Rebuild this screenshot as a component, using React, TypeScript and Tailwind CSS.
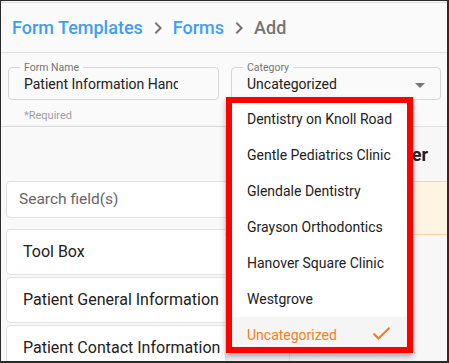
import React from "react";

const Chevron = () => (
  <svg width="24" height="24" viewBox="0 0 24 24" className="shrink-0">
    <path d="M10 6 8.59 7.41 13.17 12l-4.58 4.59L10 18l6-6z" fill="#757575" />
  </svg>
);

const Field = ({ label, value, arrow, width }: { label: string; value: string; arrow?: boolean; width: string }) => (
  <div className={`relative h-[33px] border border-[#d6d6d6] rounded-[4px] flex items-center pl-[15px] pt-[1px] ${width}`}>
    <span className="absolute top-[-6px] left-[11px] px-[4px] bg-[#fafafa] text-[10.5px] leading-[12px] text-[#757575]">
      {label}
    </span>
    <span className="text-[14px] leading-[16px] text-[#212121] whitespace-nowrap overflow-hidden w-[154px]">{value}</span>
    {arrow && (
      <svg width="24" height="24" viewBox="0 0 24 24" className="absolute right-[8px] top-[5px]">
        <path d="M7 10l5 5 5-5z" fill="#757575" />
      </svg>
    )}
  </div>
);

const items = [
  "Dentistry on Knoll Road",
  "Gentle Pediatrics Clinic",
  "Glendale Dentistry",
  "Grayson Orthodontics",
  "Hanover Square Clinic",
  "Westgrove",
];

export default function App() {
  return (
    <div className="w-[449px] h-[363px] relative overflow-hidden bg-[#fafafa] border-[#2b2b2b] border-t border-l border-r-2 border-b-2 flex flex-col font-['Roboto',sans-serif]">
      {/* Header */}
      <div className="h-[51px] mt-[1px] border-t border-b border-[#e0e0e0] flex items-center pl-[11px] gap-[3px] shrink-0">
        <span className="text-[18px] font-medium text-[#3f9ef2]">Form Templates</span>
        <Chevron />
        <span className="text-[18px] font-medium text-[#3f9ef2]">Forms</span>
        <Chevron />
        <span className="text-[18px] font-medium text-[#757575]">Add</span>
      </div>

      {/* Form row */}
      <div className="h-[74px] border-b border-[#e0e0e0] flex gap-[12px] pl-[7px] pt-[14px] shrink-0">
        <div className="flex flex-col">
          <Field label="Form Name" value="Patient Information Handout" width="w-[211px]" />
          <span className="ml-[16px] mt-[9px] text-[11px] leading-[13px] text-[#9e9e9e]">*Required</span>
        </div>
        <Field label="Category" value="Uncategorized" arrow width="w-[210px]" />
      </div>

      {/* Bottom */}
      <div className="flex flex-1 min-h-0">
        <div className="w-[224px] shrink-0 relative z-10 overflow-hidden bg-[#f9f9f9] shadow-[2px_0_4px_rgba(0,0,0,0.08)] pt-[54px]">
          <div className="ml-[5px] w-[240px] h-[37px] bg-white border border-[#e0e0e0] rounded-[4px] flex items-center pl-[12px] text-[15.5px] text-[#666666]">
            Search field(s)
          </div>
          <div className="mt-[11px] flex flex-col gap-[2px]">
            {["Tool Box", "Patient General Information", "Patient Contact Information"].map((t) => (
              <div
                key={t}
                className="ml-[5px] w-[240px] h-[46px] shrink-0 bg-white border border-[#e0e0e0] rounded-[4px] flex items-center pl-[16px] text-[16px] text-[#212121] whitespace-nowrap"
              >
                {t}
              </div>
            ))}
          </div>
        </div>
        <div className="flex-1 bg-[#f7f7f7] flex flex-col">
          <div className="h-[54px] flex items-center justify-end pr-[19px] shrink-0">
            <span className="text-[18px] font-bold text-[#212121]">Builder</span>
          </div>
          <div className="h-[54px] shrink-0 bg-[#fff4e2] border-y border-[#ffd59a]"></div>
          <div className="mt-[14px] flex-1 flex">
            <div className="w-[65px] border-r border-[#e0e0e0]"></div>
          </div>
        </div>
      </div>

      {/* Dropdown menu with red highlight */}
      <div className="absolute left-[225px] top-[96px] w-[187px] h-[256px] border-[6px] border-[#ff0000] bg-white z-20 overflow-hidden shadow-[0_4px_6px_rgba(0,0,0,0.3)]">
        <div className="-mt-[2px] flex flex-col">
          {items.map((it) => (
            <div key={it} className="h-[36px] shrink-0 flex items-center pl-[15px] text-[14px] text-[#212121] whitespace-nowrap">
              {it}
            </div>
          ))}
          <div className="h-[36px] shrink-0 flex items-center justify-between pl-[15px] pr-[17px] bg-[#f5f5f5] text-[14px] text-[#f47f20]">
            <span>Uncategorized</span>
            <svg width="17" height="13" viewBox="0 0 17 13" className="mt-[-4px]">
              <polyline points="0.5,6.5 5.5,11.5 16.5,0.8" fill="none" stroke="#f47f20" strokeWidth="2" />
            </svg>
          </div>
        </div>
      </div>
    </div>
  );
}
